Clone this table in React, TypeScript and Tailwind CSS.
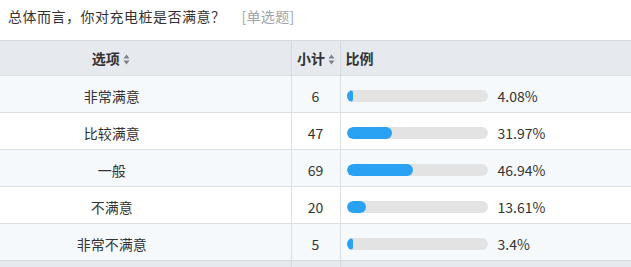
const rows = [
  { label: '非常满意', count: 6, pct: '4.08%', value: 4.08 },
  { label: '比较满意', count: 47, pct: '31.97%', value: 31.97 },
  { label: '一般', count: 69, pct: '46.94%', value: 46.94 },
  { label: '不满意', count: 20, pct: '13.61%', value: 13.61 },
  { label: '非常不满意', count: 5, pct: '3.4%', value: 3.4 },
]

const SortIcon = () => (
  <svg width="7" height="11" viewBox="0 0 7 11" className="inline-block ml-[3px] align-middle">
    <path d="M3.5 0.5 L6.5 4.5 H0.5 Z" fill="#7d8289" />
    <path d="M3.5 10.5 L6.5 6.5 H0.5 Z" fill="#7d8289" />
  </svg>
)

export default function App() {
  return (
    <div
      className="w-[631px] h-[267px] overflow-hidden bg-white text-[#333]"
      style={{ fontFamily: '"Noto Sans CJK SC", "Noto Sans", sans-serif' }}
    >
      <div className="h-[40px] pl-[8px] pt-[6px] text-[14px] leading-[20px] tracking-[0.5px]">
        总体而言，你对充电桩是否满意？
        <span className="ml-[16px] text-[#a0a4aa] tracking-[0.3px]">[单选题]</span>
      </div>
      <table className="w-[631px] border-collapse table-fixed text-[14px]">
        <colgroup>
          <col className="w-[291px]" />
          <col className="w-[49px]" />
          <col className="w-[291px]" />
        </colgroup>
        <thead>
          <tr className="h-[35px] bg-[#e6e9ee] border-t border-[#d6dae0]">
            <th className="pr-[69px] text-center font-bold border-r border-[#d6dae0]">
              选项
              <SortIcon />
            </th>
            <th className="text-center font-bold border-r border-[#d6dae0] whitespace-nowrap pl-[1px]">
              小计
              <SortIcon />
            </th>
            <th className="pl-[5px] text-left font-bold">比例</th>
          </tr>
        </thead>
        <tbody>
          {rows.map((r, i) => (
            <tr
              key={r.label}
              className={`h-[37px] border-t border-[#dcdfe4] ${i % 2 === 0 ? 'bg-[#f6f9fc]' : 'bg-white'}`}
            >
              <td className="pr-[67px] pt-[4px] text-center border-r border-[#dcdfe4]">{r.label}</td>
              <td className="pt-[4px] text-center border-r border-[#dcdfe4]">{r.count}</td>
              <td className="pl-[6px] pt-[4px]">
                <div className="flex items-center">
                  <div className="w-[141px] h-[12px] rounded-full bg-[#e3e3e3] overflow-hidden">
                    <div
                      className="h-full rounded-full bg-[#2aa2f4]"
                      style={{ width: Math.max(6, Math.round((r.value * 141) / 100)) }}
                    />
                  </div>
                  <span className="ml-[10px]">{r.pct}</span>
                </div>
              </td>
            </tr>
          ))}
          <tr className="h-[20px] bg-[#e6e9ee] border-t border-[#d6dae0]">
            <td className="border-r border-[#d6dae0]" />
            <td className="border-r border-[#d6dae0]" />
            <td />
          </tr>
        </tbody>
      </table>
    </div>
  )
}
